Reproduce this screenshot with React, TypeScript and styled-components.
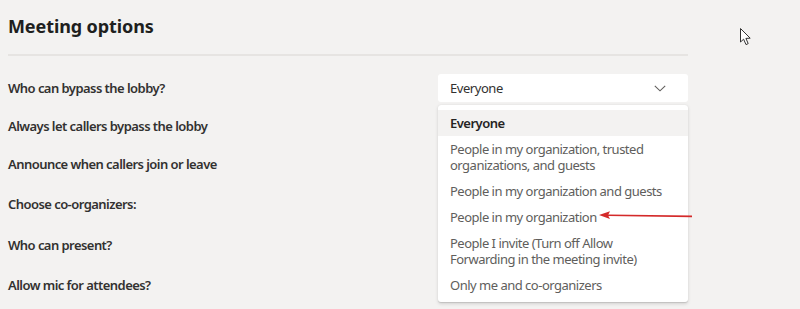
import React from "react";
import styled, { createGlobalStyle } from "styled-components";

const Global = createGlobalStyle`
  html, body { margin: 0; padding: 0; background: #f3f2f1; }
  body { font-family: "Noto Sans", "Open Sans", sans-serif; color: #252423; }
  * { box-sizing: border-box; }
`;

const Page = styled.div`
  position: relative;
  width: 800px;
  height: 309px;
  overflow: hidden;
  padding: 0 0 0 8px;
  background: #f3f2f1;
`;

const Header = styled.header`
  width: 680px;
  height: 56px;
  display: flex;
  align-items: center;
  border-bottom: 2px solid #e6e4e2;
  padding-bottom: 2px;
`;

const Title = styled.h1`
  margin: 0;
  font-size: 18px;
  font-weight: 700;
  color: #201f1e;
  letter-spacing: -0.1px;
`;

const Options = styled.div`
  width: 680px;
  padding-top: 13px;
  display: flex;
  flex-direction: column;
`;

const Row = styled.div<{ $h: number }>`
  height: ${(p) => p.$h}px;
  display: flex;
  align-items: center;
  justify-content: space-between;
`;

const Label = styled.span`
  font-size: 13px;
  font-weight: 600;
  letter-spacing: -0.55px;
  color: #323130;
`;

const Control = styled.div`
  position: relative;
  width: 250px;
`;

const Field = styled.div`
  height: 28px;
  background: #ffffff;
  border-radius: 3px;
  display: flex;
  align-items: center;
  justify-content: space-between;
  padding: 0 22px 0 12px;
  font-size: 13px;
  letter-spacing: -0.45px;
  color: #323130;
`;

const Menu = styled.ul`
  position: absolute;
  top: 31px;
  left: 0;
  width: 250px;
  margin: 0;
  padding: 5px 0 4px;
  list-style: none;
  background: #ffffff;
  border-radius: 3px;
  box-shadow: 0 1.6px 3.6px rgba(0, 0, 0, 0.13), 0 0.3px 0.9px rgba(0, 0, 0, 0.11);
  z-index: 2;
`;

const Item = styled.li<{ $active?: boolean }>`
  padding: 5px 12px;
  font-size: 13px;
  line-height: 16px;
  letter-spacing: -0.5px;
  color: ${(p) => (p.$active ? "#252423" : "#605e5c")};
  font-weight: ${(p) => (p.$active ? 600 : 400)};
  background: ${(p) => (p.$active ? "#f3f2f1" : "transparent")};
`;

const Annotation = styled.svg`
  position: absolute;
  left: 596px;
  top: 209px;
  z-index: 3;
`;

const Cursor = styled.svg`
  position: absolute;
  left: 739px;
  top: 27px;
`;

const Chevron = () => (
  <svg width="12" height="7" viewBox="0 0 12 7">
    <path d="M0.8 0.8 L6 5.8 L11.2 0.8" fill="none" stroke="#605e5c" strokeWidth="1.1" />
  </svg>
);

const rows: { label: string; h: number }[] = [
  { label: "Always let callers bypass the lobby", h: 38 },
  { label: "Announce when callers join or leave", h: 38 },
  { label: "Choose co-organizers:", h: 41 },
  { label: "Who can present?", h: 41 },
  { label: "Allow mic for attendees?", h: 39 },
];

const items = [
  "Everyone",
  "People in my organization, trusted organizations, and guests",
  "People in my organization and guests",
  "People in my organization",
  "People I invite (Turn off Allow Forwarding in the meeting invite)",
  "Only me and co-organizers",
];

export default function App() {
  return (
    <>
      <Global />
      <Page>
        <Header>
          <Title>Meeting options</Title>
        </Header>
        <Options>
          <Row $h={38}>
            <Label>Who can bypass the lobby?</Label>
            <Control>
              <Field>
                <span>Everyone</span>
                <Chevron />
              </Field>
              <Menu>
                {items.map((t, i) => (
                  <Item key={t} $active={i === 0}>
                    {t}
                  </Item>
                ))}
              </Menu>
            </Control>
          </Row>
          {rows.map((r) => (
            <Row key={r.label} $h={r.h}>
              <Label>{r.label}</Label>
            </Row>
          ))}
        </Options>
        <Annotation width="100" height="14" viewBox="0 0 100 14">
          <path d="M12 6.2 L96 7.4" stroke="#d42a2a" strokeWidth="1.6" fill="none" />
          <path d="M3 6 L14 2.2 L12 6.2 L14 10 Z" fill="#d42a2a" />
        </Annotation>
        <Cursor width="14" height="20" viewBox="0 0 14 20">
          <path
            d="M1.5 1.5 L1.5 15 L4.6 12.2 L7 17.6 L9.2 16.6 L6.9 11.4 L11.2 11.2 Z"
            fill="#ffffff"
            stroke="#333333"
            strokeWidth="1"
            strokeLinejoin="round"
          />
        </Cursor>
      </Page>
    </>
  );
}
